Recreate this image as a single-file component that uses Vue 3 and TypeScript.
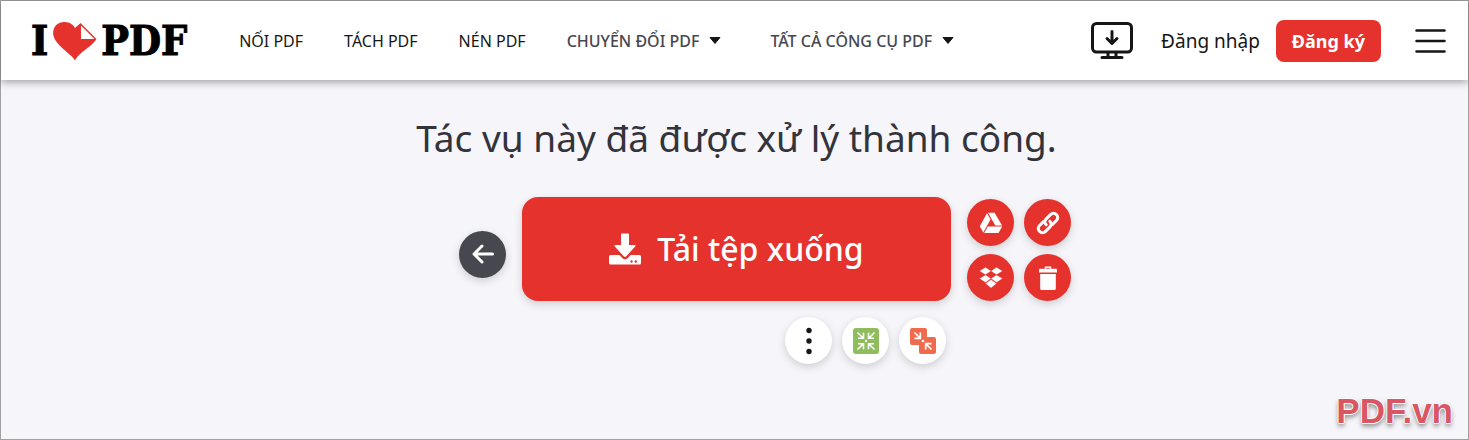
<script setup lang="ts">
interface NavItem {
  label: string
  menu: boolean
}

const navItems: NavItem[] = [
  { label: 'NỐI PDF', menu: false },
  { label: 'TÁCH PDF', menu: false },
  { label: 'NÉN PDF', menu: false },
  { label: 'CHUYỂN ĐỔI PDF', menu: true },
  { label: 'TẤT CẢ CÔNG CỤ PDF', menu: true },
]
</script>

<template>
  <div class="page">
    <header class="header">
      <a class="logo" href="#" aria-label="I love PDF">
        <span>I</span>
        <svg class="heart" width="45" height="40" viewBox="0 0 45 40" aria-hidden="true">
          <path d="M23 39.500C20 33 2 24 1.200 13C.800 5 6 1 12.500 1C18 1 21.500 4 23 7L28.500 2L44.500 18C40 26 27 31 23 39.500Z" fill="#e5322d" />
          <path d="M29 4.500V18H42.500Z" fill="#fff" />
        </svg>
        <span>PDF</span>
      </a>

      <nav class="nav">
        <template v-for="item in navItems" :key="item.label">
          <button v-if="item.menu" class="nav-item nav-menu" type="button">
            {{ item.label }}
            <svg width="12" height="7" viewBox="0 0 12 7" aria-hidden="true">
              <path d="M1 .5H11L6 6.500Z" fill="#161616" stroke="#161616" stroke-linejoin="round" />
            </svg>
          </button>
          <a v-else class="nav-item" href="#">{{ item.label }}</a>
        </template>
      </nav>

      <div class="account">
        <a class="desktop" href="#" aria-label="Desktop">
          <svg width="42" height="38" viewBox="0 0 42 38" fill="none" stroke="#161616" stroke-width="3" stroke-linecap="round" stroke-linejoin="round" aria-hidden="true">
            <rect x="1.500" y="1.500" width="39" height="28.500" rx="4" />
            <path d="M21 9.500V21M16 16.500L21 21.500L26 16.500M11 35.500H31" />
            <path d="M17 30V35M25 30V35" stroke-linecap="butt" />
          </svg>
        </a>
        <a class="login" href="#">Đăng nhập</a>
        <a class="signup" href="#">Đăng ký</a>
        <button class="burger" type="button" aria-label="Menu">
          <svg width="31" height="26" viewBox="0 0 31 26" stroke="#161616" stroke-width="2.500" stroke-linecap="round" aria-hidden="true">
            <path d="M1.500 2.500H29.500M1.500 13H29.500M1.500 23.500H29.500" />
          </svg>
        </button>
      </div>
    </header>

    <main class="main">
      <h1 class="title">Tác vụ này đã được xử lý thành công.</h1>

      <div class="actions">
        <button class="round back" type="button" aria-label="Back">
          <svg width="22" height="20" viewBox="0 0 22 20" fill="none" stroke="#fff" stroke-width="3" stroke-linecap="round" stroke-linejoin="round" aria-hidden="true">
            <path d="M10 2L2 10L10 18M2.500 10H20.500" />
          </svg>
        </button>

        <button class="download" type="button">
          <svg width="32" height="32" viewBox="0 0 32 32" aria-hidden="true">
            <path d="M13 .5H19Q20 .5 20 1.500V12H25.500Q27.300 12.300 26 13.800L17.300 23.200Q16 24.500 14.700 23.200L6 13.800Q4.700 12.300 6.500 12H12V1.500Q12 .5 13 .5Z" fill="#fff" />
            <path d="M1.500 22H10.500L13.200 24.900Q16 27.500 18.800 24.900L21.500 22H30.500Q32 22 32 23.500V30Q32 31.500 30.500 31.500H1.500Q0 31.500 0 30V23.500Q0 22 1.500 22Z" fill="#fff" />
            <circle cx="22.500" cy="28.500" r="1.200" fill="#e5322d" />
            <circle cx="26.800" cy="28.500" r="1.200" fill="#e5322d" />
          </svg>
          Tải tệp xuống
        </button>

        <div class="share">
          <button class="round red" type="button" aria-label="Google Drive">
            <svg width="24" height="22" viewBox="0 0 24 22" fill="#fff" aria-hidden="true">
              <path d="M8 1.300L11.500 7.500L4.300 20.500L.8 14.300Z" />
              <path d="M9 .8H15.600L23.100 13.500H16.300Z" />
              <path d="M8.800 14.500H23.200L19.500 21H5.200Z" />
            </svg>
          </button>
          <button class="round red" type="button" aria-label="Link">
            <svg width="24" height="24" viewBox="0 0 24 24" fill="none" stroke="#fff" stroke-width="3" stroke-linecap="round" aria-hidden="true">
              <path d="M10.200 13.800C8.400 12 8.400 9.700 10.200 7.900L14.500 3.600C16.300 1.800 18.700 1.800 20.400 3.600C22.200 5.300 22.200 7.700 20.400 9.500L16.500 13.400" />
              <path d="M13.800 10.200C15.600 12 15.600 14.300 13.800 16.100L9.500 20.400C7.700 22.200 5.300 22.200 3.600 20.400C1.800 18.700 1.800 16.300 3.600 14.500L7.500 10.600" />
            </svg>
          </button>
          <button class="round red" type="button" aria-label="Dropbox">
            <svg width="24" height="22" viewBox="0 0 24 22" fill="#fff" aria-hidden="true">
              <path d="M6.500 .3L12 4L6.500 7.700L.5 4ZM17.500 .3L23.500 4L17.500 7.700L12 4ZM6.500 7.900L12 11.600L6.500 15.500L.5 11.600ZM17.500 7.900L23.500 11.600L17.500 15.500L12 11.600ZM12 12.600L17.500 16.500L12 21L6.500 16.500Z" stroke="#e5322d" stroke-width=".3" />
            </svg>
          </button>
          <button class="round red" type="button" aria-label="Delete">
            <svg width="18" height="24" viewBox="0 0 18 24" fill="#fff" aria-hidden="true">
              <path d="M6.500 3V1.200H11.500V3" fill="none" stroke="#fff" stroke-width="1.400" />
              <path d="M1 2.800H17Q18 2.800 18 4V6.500H0V4Q0 2.800 1 2.800ZM1.200 8H16.800V22.500Q16.800 24 15.300 24H2.700Q1.200 24 1.200 22.500Z" />
            </svg>
          </button>
        </div>

        <div class="more">
          <button class="round white" type="button" aria-label="More">
            <svg width="6" height="28" viewBox="0 0 6 28" fill="#161616" aria-hidden="true">
              <circle cx="3" cy="3.500" r="2.700" />
              <circle cx="3" cy="14" r="2.700" />
              <circle cx="3" cy="24.500" r="2.700" />
            </svg>
          </button>
          <button class="round white" type="button" aria-label="Nén PDF">
            <svg width="26" height="26" viewBox="0 0 26 26" fill="none" stroke="#fff" stroke-width="1.600" aria-hidden="true">
              <rect width="26" height="26" rx="3" fill="#8fbc5d" stroke="none" />
              <path d="M4.500 4.500L10 10M10.500 4.800V10.300H5M21.500 4.500L16 10M15.500 4.800V10.300H21M4.500 21.500L10 16M10.500 21.200V15.700H5M21.500 21.500L16 16M15.500 21.200V15.700H21" />
              <circle cx="13" cy="13" r="1.200" fill="#fff" stroke="none" />
            </svg>
          </button>
          <button class="round white" type="button" aria-label="Nối PDF">
            <svg width="26" height="26" viewBox="0 0 26 26" fill="none" stroke="#fff" stroke-width="1.700" aria-hidden="true">
              <path d="M2 0H15Q17 0 17 2V9H24Q26 9 26 11V24Q26 26 24 26H11Q9 26 9 24V17H2Q0 17 0 15V2Q0 0 2 0Z" fill="#ee6c4d" stroke="none" />
              <path d="M4.500 4.500L9.800 9.800M10.300 4.500V10.300H4.500M21.500 21.500L16.200 16.200M15.700 21.500V15.700H21.500" />
              <circle cx="13" cy="13" r="1.300" fill="#fff" stroke="none" />
            </svg>
          </button>
        </div>
      </div>
    </main>

    <div class="watermark">PDF.vn</div>
  </div>
</template>

<style>
body {
  margin: 0;
}
</style>

<style scoped>
.page {
  position: relative;
  box-sizing: border-box;
  min-height: 100vh;
  border: 1px solid #a0a0a0;
  background: #f5f5fa;
  color: #161616;
  font-family: "Noto Sans", sans-serif;
}

a {
  color: inherit;
  text-decoration: none;
}

button {
  padding: 0;
  border: 0;
  background: none;
  color: inherit;
  font-family: inherit;
  cursor: pointer;
}

svg {
  display: block;
  flex: none;
}

.header {
  display: flex;
  align-items: center;
  box-sizing: border-box;
  height: 79px;
  padding: 0 22px 0 30px;
  background: #fff;
  box-shadow: 0 2px 8px rgba(0, 0, 0, 0.36);
  white-space: nowrap;
}

.logo {
  display: flex;
  align-items: center;
  gap: 4px;
  color: #000;
  font: bold 41px/48px "DejaVu Serif Condensed", "DejaVu Serif", serif;
  -webkit-text-stroke: 1px #000;
}

.nav {
  display: flex;
  align-items: center;
  gap: 41px;
  margin-left: 52px;
}

.nav-item {
  font-size: 16px;
  line-height: 24px;
}

.nav-menu {
  display: flex;
  align-items: center;
  gap: 10px;
  margin-right: 8px;
  color: #47474f;
  font-weight: 500;
}

.account {
  display: flex;
  align-items: center;
  margin-left: auto;
}

.login {
  margin: 0 16px 0 28px;
  font-size: 19px;
  line-height: 26px;
}

.signup {
  padding: 8px 16px;
  border-radius: 8px;
  background: #e5322d;
  color: #fff;
  font-size: 18px;
  font-weight: 700;
  line-height: 26px;
}

.burger {
  margin-left: 34px;
}

.main {
  padding: 32px 0 0 4px;
}

.title {
  margin: 0;
  color: #33333b;
  font-size: 37px;
  font-weight: 400;
  line-height: 52px;
  text-align: center;
}

.actions {
  display: grid;
  grid-template-columns: 1fr 429px 1fr;
  column-gap: 16px;
  row-gap: 16px;
  align-items: center;
  margin-top: 33px;
}

.round {
  display: flex;
  align-items: center;
  justify-content: center;
  width: 47px;
  height: 47px;
  border-radius: 50%;
  box-shadow: 0 3px 8px rgba(0, 0, 0, 0.16);
}

.back {
  justify-self: end;
  margin-top: 10px;
  background: #47474f;
}

.download {
  display: flex;
  align-items: center;
  justify-content: center;
  gap: 16px;
  height: 104px;
  border-radius: 16px;
  background: #e5322d;
  box-shadow: 0 3px 8px rgba(0, 0, 0, 0.16);
  color: #fff;
  font-size: 32px;
  font-weight: 500;
  line-height: 44px;
}

.share {
  display: grid;
  grid-template-columns: 47px 47px;
  align-self: end;
  gap: 8px 10px;
}

.red {
  background: #e5322d;
}

.more {
  display: flex;
  grid-column: 2;
  justify-content: flex-end;
  gap: 10px;
  padding-right: 5px;
}

.white {
  background: #fff;
}

.watermark {
  position: absolute;
  right: 15px;
  bottom: 8px;
  color: #d95763;
  font: bold 35px/40px "Liberation Sans", Arial, sans-serif;
  text-shadow: 1px 0 #fff, -1px 0 #fff, 0 1px #fff, 0 -1px #fff, 0 3px 5px rgba(0, 0, 0, 0.5);
}
</style>
